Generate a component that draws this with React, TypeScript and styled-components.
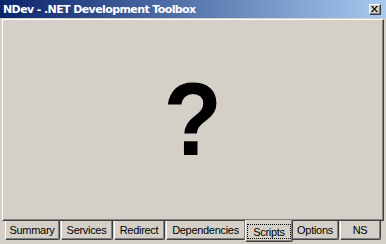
import React from "react";
import styled, { createGlobalStyle } from "styled-components";

const Global = createGlobalStyle`
  html, body { margin: 0; padding: 0; background: #d4d0c8; }
  #root { width: 386px; height: 244px; }
`;

const Window = styled.div`
  width: 386px;
  height: 244px;
  background: #d4d0c8;
  display: flex;
  flex-direction: column;
  overflow: hidden;
  font-family: "Liberation Sans", Arial, sans-serif;
`;

const TitleBar = styled.div`
  height: 18px;
  flex: none;
  box-sizing: border-box;
  display: flex;
  align-items: center;
  justify-content: space-between;
  padding: 0 5px 0 3px;
  background: linear-gradient(to right, #0a246a, #a6caf0);
  color: #fff;
  font-family: "DejaVu Sans", Verdana, sans-serif;
  font-weight: bold;
  font-size: 11px;
  letter-spacing: -0.6px;
`;

const CloseButton = styled.div`
  width: 12px;
  height: 11px;
  box-sizing: border-box;
  background: #d4d0c8;
  border-top: 1px solid #fff;
  border-left: 1px solid #fff;
  border-right: 1px solid #404040;
  border-bottom: 1px solid #404040;
  box-shadow: inset -1px -1px 0 #808080;
  display: flex;
  align-items: center;
  justify-content: center;
  padding: 0 1px 1px 0;
`;

const Body = styled.div`
  flex: 1;
  display: flex;
  flex-direction: column;
  padding: 1px 2px 0 2px;
`;

const Panel = styled.div`
  height: 202px;
  flex: none;
  box-sizing: border-box;
  border-top: 1px solid #fff;
  border-left: 1px solid #fff;
  border-right: 1px solid #404040;
  border-bottom: 1px solid #404040;
  box-shadow: inset -1px -1px 0 #808080;
  display: flex;
  align-items: center;
  justify-content: center;
`;

const Question = styled.div`
  font-family: "Liberation Sans", Arial, sans-serif;
  font-weight: bold;
  font-size: 104px;
  line-height: 1;
  color: #000;
  margin-bottom: 2px;
  transform: scaleX(0.92);
`;

const TabRow = styled.div`
  display: flex;
  align-items: flex-start;
  gap: 1px;
  padding-left: 3px;
`;

const Tab = styled.div<{ $active?: boolean; $w: number }>`
  box-sizing: border-box;
  width: ${(p) => p.$w}px;
  height: ${(p) => (p.$active ? 22 : 19)}px;
  margin: ${(p) => (p.$active ? "-1px -2px 0 -2px" : "0")};
  display: flex;
  align-items: stretch;
  background: #d4d0c8;
  border-left: 1px solid #fff;
  border-right: 1px solid #404040;
  border-bottom: 1px solid #404040;
  box-shadow: inset -1px -1px 0 #808080;
  border-bottom-right-radius: 2px;
  border-bottom-left-radius: 1px;
  font-size: 11px;
  letter-spacing: -0.3px;
  color: #000;
  position: relative;
  z-index: ${(p) => (p.$active ? 1 : 0)};
`;

const TabLabel = styled.span<{ $focus?: boolean }>`
  flex: 1;
  display: flex;
  align-items: center;
  justify-content: center;
  box-sizing: border-box;
  margin: ${(p) => (p.$focus ? "4px 1px 2px 1px" : "0 0 1px 0")};
  border: 1px dotted ${(p) => (p.$focus ? "#000" : "transparent")};
  padding-right: ${(p) => (p.$focus ? 0 : 1)}px;
`;

const tabs: { label: string; w: number; active?: boolean }[] = [
  { label: "Summary", w: 55 },
  { label: "Services", w: 52 },
  { label: "Redirect", w: 51 },
  { label: "Dependencies", w: 80 },
  { label: "Scripts", w: 48, active: true },
  { label: "Options", w: 47 },
  { label: "NS", w: 41 },
];

export default function App() {
  return (
    <>
      <Global />
      <Window>
        <TitleBar>
          <span>NDev - .NET Development Toolbox</span>
          <CloseButton>
            <svg width="7" height="6" viewBox="0 0 7 6">
              <path d="M0 0h1.6L3.5 2.2 5.4 0H7L4.3 3 7 6H5.4L3.5 3.8 1.6 6H0l2.7-3z" fill="#000" />
            </svg>
          </CloseButton>
        </TitleBar>
        <Body>
          <Panel>
            <Question>?</Question>
          </Panel>
          <TabRow>
            {tabs.map((t) => (
              <Tab key={t.label} $active={t.active} $w={t.w}>
                <TabLabel $focus={t.active}>{t.label}</TabLabel>
              </Tab>
            ))}
          </TabRow>
        </Body>
      </Window>
    </>
  );
}
